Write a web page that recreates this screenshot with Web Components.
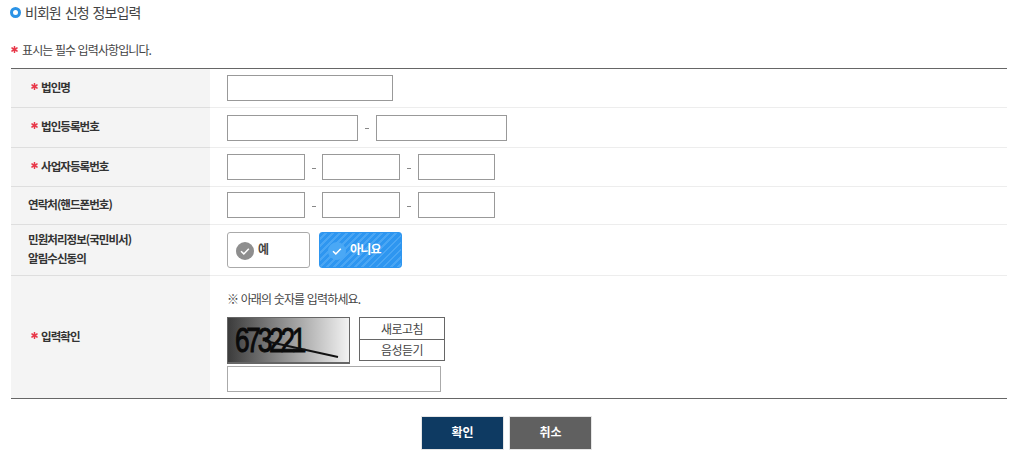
<!DOCTYPE html>
<html lang="ko">
<head>
<meta charset="utf-8">
<title>비회원 신청 정보입력</title>
<style>
body { margin: 0; background: #fff; color: #333; font-family: "Noto Sans CJK KR", "Noto Sans", sans-serif; }
</style>
</head>
<body>
<apply-form></apply-form>

<script>
const reqMark = `<svg class="req" width="7" height="7" viewBox="0 0 7 7"><g stroke="#e8394a" stroke-width="1.5" stroke-linecap="round"><path d="M3.5 .6v5.8"/><path d="M1 2l5 3"/><path d="M6 2L1 5"/></g></svg>`;

class SectionTitle extends HTMLElement
{
    constructor()
    {
        super();
        this.attachShadow({ mode: "open" }).innerHTML = `
<style>
:host { display: flex; align-items: center; gap: 4px; height: 24px; padding-left: 10px; font-size: 14px; letter-spacing: -.95px; word-spacing: 1px; color: #444; }
i { width: 5px; height: 5px; border: 3px solid #2b93e6; border-radius: 50%; display: block; }
</style>
<i></i><slot></slot>`;
    }
}

class FormRow extends HTMLElement
{
    constructor()
    {
        super();
        const required = this.hasAttribute("required");
        this.attachShadow({ mode: "open" }).innerHTML = `
<style>
:host { display: grid; grid-template-columns: 199px 1fr; border-bottom: 1px solid #ededed; box-sizing: border-box; }
:host(:last-child) { border-bottom: 0; }
:host(:last-child) .label { box-shadow: none; }
.label { background: #f4f4f4; box-shadow: 0 1px 0 #dedede; display: flex; align-items: center; gap: 3px; font-size: 11.5px; font-weight: 700; letter-spacing: -.95px; line-height: 19px; color: #333; padding-left: ${required ? 20 : 17}px; padding-bottom: 2px; box-sizing: border-box; }
.req { flex: none; margin-top: -2px; }
.value { padding-left: 17px; display: flex; align-items: center; gap: 7px; }
</style>
<div class="label">${required ? reqMark : ""}<span><slot name="label"></slot></span></div>
<div class="value"><slot></slot></div>`;
    }
}

class TextField extends HTMLElement
{
    constructor()
    {
        super();
        this.attachShadow({ mode: "open" }).innerHTML = `
<style>
:host { display: block; box-sizing: border-box; height: 26px; border: 1px solid #999; background: #fff; }
</style>`;
    }
}

class DashSep extends HTMLElement
{
    constructor()
    {
        super();
        this.attachShadow({ mode: "open" }).innerHTML = `
<style>
:host { display: block; width: 4px; height: 1px; background: #888; margin: 2px 0 0; }
</style>`;
    }
}

class ChoiceButton extends HTMLElement
{
    constructor()
    {
        super();
        this.attachShadow({ mode: "open" }).innerHTML = `
<style>
:host { display: flex; align-items: center; gap: 4px; box-sizing: border-box; width: 83px; height: 36px; border: 1px solid #aaa; border-radius: 3px; padding: 1px 0 0 8px; background: #fff; font-size: 12px; font-weight: 700; color: #444; letter-spacing: -.8px; }
:host([on]) { border-color: #2e96f0; color: #fff; background: repeating-linear-gradient(135deg, #2e96f0 0 3px, #4aa6f4 3px 5px); }
svg { flex: none; }
span { margin-top: -4px; }
</style>
<svg width="18" height="18" viewBox="0 0 18 18"><circle cx="9" cy="9" r="9" fill="${this.hasAttribute("on") ? "#4aa8f5" : "#8e8e8e"}"/><path d="M5 9.3l2.8 2.6 5-5.2" fill="none" stroke="#fff" stroke-width="1.5"/></svg>
<span><slot></slot></span>`;
    }
}

class CaptchaBox extends HTMLElement
{
    constructor()
    {
        super();
        this.attachShadow({ mode: "open" }).innerHTML = `
<style>
:host { display: grid; grid-template-columns: 123px 86px; grid-template-rows: 23px 23px; column-gap: 9px; width: 214px; }
.pic { grid-row: 1 / 3; position: relative; height: 47px; box-sizing: border-box; border: 1px solid #666; border-bottom-width: 2px; background: linear-gradient(90deg, #3c3c3c, #f2f2f2); overflow: hidden; font-family: "Liberation Sans", sans-serif; }
.pic svg { position: absolute; left: 0; top: 0; }
.pic b { position: absolute; left: 7px; top: 1px; font-size: 35px; line-height: 42px; font-weight: 400; letter-spacing: -4.3px; color: #0a0a0a; -webkit-text-stroke: 1px #0a0a0a; transform: scaleX(.75); transform-origin: left; }
button { all: unset; box-sizing: border-box; height: 23px; border: 1.5px solid #666; text-align: center; font-family: inherit; font-size: 12px; line-height: 20px; letter-spacing: -.5px; color: #444; }
button + button { margin-top: -1px; height: 22px; }
.input { grid-column: 1 / 3; margin-top: 3px; box-sizing: border-box; width: 214px; height: 26px; border: 1px solid #aaa; }
</style>
<div class="pic"><b>673221</b><svg width="121" height="45"><path d="M37 23L110 39" stroke="#111" stroke-width="2"/></svg></div>
<button>새로고침</button>
<button>음성듣기</button>
<div class="input"></div>`;
    }
}

class ActionButton extends HTMLElement
{
    constructor()
    {
        super();
        this.attachShadow({ mode: "open" }).innerHTML = `
<style>
:host { display: block; width: 83px; height: 34px; box-sizing: border-box; background: #0e3a62; border: 1px solid #e6e6e6; color: #fff; font-size: 12px; font-weight: 700; line-height: 29px; text-align: center; }
:host([gray]) { background: #606060; }
</style>
<slot></slot>`;
    }
}

class ApplyForm extends HTMLElement
{
    constructor()
    {
        super();
        this.attachShadow({ mode: "open" }).innerHTML = `
<style>
:host { display: block; width: 1024px; height: 461px; overflow: hidden; }
.note { display: flex; align-items: center; gap: 4px; margin: 13px 0 0 11px; height: 24px; font-size: 12px; letter-spacing: -.9px; color: #444; }
.grid { margin: 7px 17px 0 11px; border-top: 1px solid #666; border-bottom: 1px solid #666; display: flex; flex-direction: column; }
.r1 { height: 39px; } .r2 { height: 40px; } .r3 { height: 39px; } .r4 { height: 38px; } .r5 { height: 51px; } .r6 { height: 122px; }
.r4 text-field { margin-bottom: 2px; }
.w166 { width: 166px; } .w131 { width: 131px; } .w78 { width: 78px; } .w77 { width: 77px; }
.tight { margin: 2px -1px 0 0; }
.stack { display: flex; flex-direction: column; padding-top: 8px; }
.hint { font-size: 12px; letter-spacing: -.85px; color: #444; line-height: 18px; margin: 0 0 9px; }
.pair { display: flex; gap: 9px; }
.foot { display: flex; justify-content: center; gap: 5px; margin-top: 17px; padding-right: 11px; }
</style>
<section-title>비회원 신청 정보입력</section-title>
<div class="note">${reqMark}<span>표시는 필수 입력사항입니다.</span></div>
<div class="grid">
  <form-row class="r1" required><span slot="label">법인명</span><text-field class="w166"></text-field></form-row>
  <form-row class="r2" required><span slot="label">법인등록번호</span><text-field class="w131"></text-field><dash-sep></dash-sep><text-field class="w131"></text-field></form-row>
  <form-row class="r3" required><span slot="label">사업자등록번호</span><text-field class="w78"></text-field><dash-sep class="tight"></dash-sep><text-field class="w78"></text-field><dash-sep></dash-sep><text-field class="w77"></text-field></form-row>
  <form-row class="r4"><span slot="label">연락처(핸드폰번호)</span><text-field class="w78"></text-field><dash-sep class="tight"></dash-sep><text-field class="w78"></text-field><dash-sep></dash-sep><text-field class="w77"></text-field></form-row>
  <form-row class="r5"><span slot="label">민원처리정보(국민비서)<br>알림수신동의</span><div class="pair"><choice-button>예</choice-button><choice-button on>아니요</choice-button></div></form-row>
  <form-row class="r6" required><span slot="label">입력확인</span><div class="stack"><div class="hint">※ 아래의 숫자를 입력하세요.</div><captcha-box></captcha-box></div></form-row>
</div>
<div class="foot"><action-button>확인</action-button><action-button gray>취소</action-button></div>`;
    }
}

customElements.define("section-title", SectionTitle);
customElements.define("form-row", FormRow);
customElements.define("text-field", TextField);
customElements.define("dash-sep", DashSep);
customElements.define("choice-button", ChoiceButton);
customElements.define("captcha-box", CaptchaBox);
customElements.define("action-button", ActionButton);
customElements.define("apply-form", ApplyForm);
</script>
</body>
</html>
